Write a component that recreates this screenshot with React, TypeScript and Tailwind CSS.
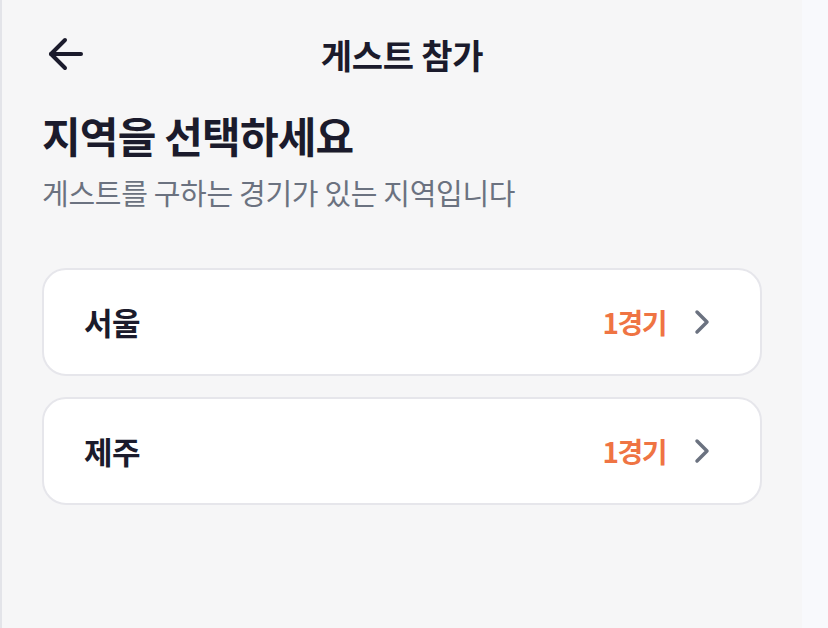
const regions = [
  { name: "서울", count: 1 },
  { name: "제주", count: 1 },
];

function BackArrow() {
  return (
    <svg width="36" height="34" viewBox="0 0 36 34" fill="none" stroke="#1b1b2c" strokeWidth="4" strokeLinecap="round" strokeLinejoin="round">
      <path d="M33 17H3" />
      <path d="M17 3 3 17l14 14" />
    </svg>
  );
}

function Chevron() {
  return (
    <svg width="16" height="26" viewBox="0 0 16 26" fill="none" stroke="#6b7280" strokeWidth="3.5" strokeLinecap="round" strokeLinejoin="round">
      <path d="M3 3l10 10-10 10" />
    </svg>
  );
}

export default function App() {
  return (
    <div className="flex min-h-screen bg-[#f8f9fc] font-['Noto_Sans_CJK_KR',sans-serif]">
      <div className="w-[802px] min-h-[628px] border-l-2 border-[#e3e4e9] bg-[#f6f6f7] px-10">
        {/* Header */}
        <header className="relative flex h-[108px] items-center justify-center">
          <button className="absolute left-[6px] top-[37px]">
            <BackArrow />
          </button>
          <h1 className="text-[34px] font-bold tracking-[-0.3px] text-[#1b1b2c]">게스트 참가</h1>
        </header>

        <div>
          <h2 className="text-[42px] font-bold leading-[54px] tracking-[-0.8px] text-[#1b1b2c]">지역을 선택하세요</h2>
          <p className="mt-[10px] text-[29px] leading-[40px] tracking-[-0.3px] text-[#6b7280]">게스트를 구하는 경기가 있는 지역입니다</p>
        </div>

        <div className="mt-[56px] flex flex-col gap-[21px]">
          {regions.map((r) => (
            <div key={r.name} className="flex h-[108px] items-center justify-between rounded-[24px] border-2 border-[#e6e6eb] bg-white pl-10 pr-[50px]">
              <span className="text-[31px] font-semibold tracking-[-0.5px] text-[#1b1b2c]">{r.name}</span>
              <div className="flex items-center gap-[28px]">
                <span className="text-[28px] font-bold tracking-[-1.5px] text-[#ef7443]">{r.count}경기</span>
                <Chevron />
              </div>
            </div>
          ))}
        </div>
      </div>
    </div>
  );
}
